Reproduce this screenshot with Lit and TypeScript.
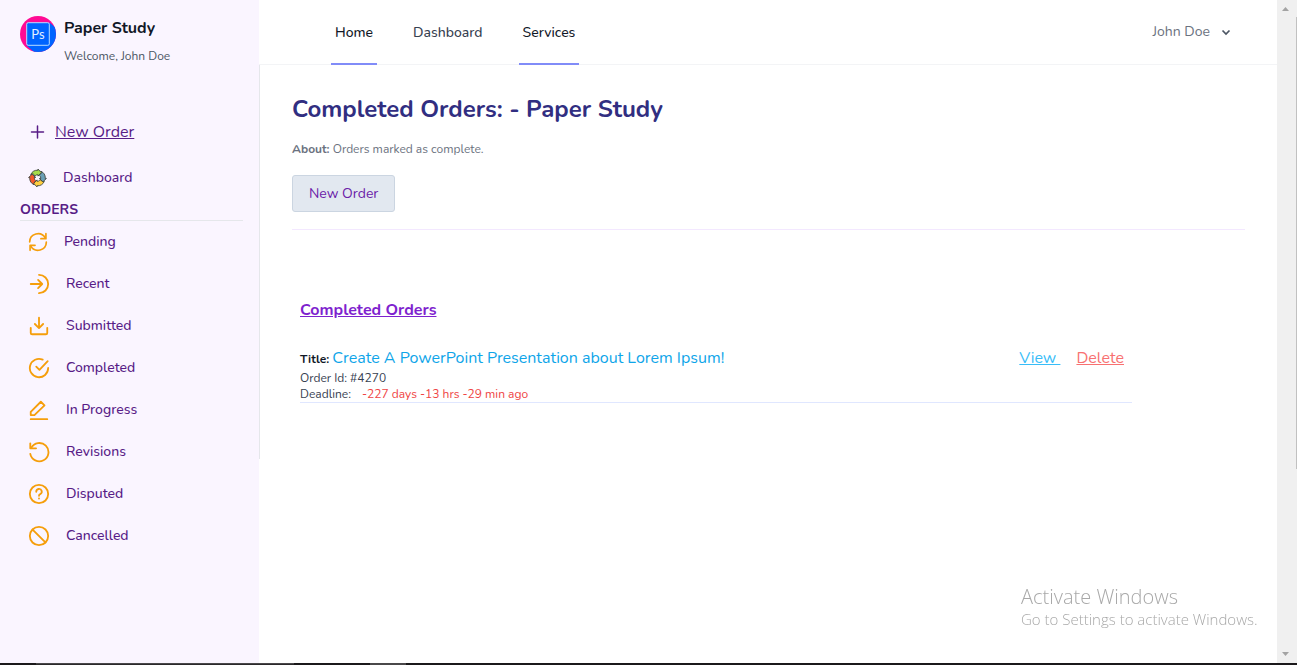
import { LitElement, html, css, svg } from "lit";
import { customElement, property } from "lit/decorators.js";

const icons: Record<string, unknown> = {
  cycle: svg`<path d="M22 12a10 10 0 0 1-18.600 5M2 12A10 10 0 0 1 20.600 7"/><path d="M21.500 2v6h-6M2.500 22v-6h6"/>`,
  enter: svg`<path d="M12 2a10 10 0 0 1 0 20"/><path d="M3 12h12M11 7.500l4.500 4.500-4.500 4.500"/>`,
  download: svg`<path d="M3 14v5.500a1.500 1.500 0 0 0 1.500 1.500h15a1.500 1.500 0 0 0 1.500-1.500V14"/><path d="M12 3v11M7.500 9.800 12 14.300l4.500-4.500"/>`,
  check: svg`<path d="M16 2.900A10 10 0 1 0 22 12"/><path d="m9 10.500 3.500 3.500L21.500 4.500"/>`,
  edit: svg`<path d="M3 22h18"/><path d="M3 17.500V14L14 3l4 4L7 17.500z"/>`,
  undo: svg`<path d="M2.500 14A10 10 0 1 0 3.500 7.500"/><path d="M2.500 2.500V8h6.300"/>`,
  question: svg`<circle cx="12" cy="12" r="10"/><path d="M9 9.500a3 3 0 1 1 4.300 2.700c-.900.400-1.300.900-1.300 1.800"/><path d="M12 16.800v.200"/>`,
  block: svg`<circle cx="12" cy="12" r="10"/><path d="m5 5 14 14"/>`,
};

@customElement("stroke-icon")
class StrokeIcon extends LitElement {
  @property() name = "";
  static styles = css`
    :host { display: flex; flex: none; width: 22px; height: 22px; color: #f59e0b; }
    svg { width: 100%; height: 100%; }
  `;
  render() {
    return html`<svg viewBox="0 0 24 24" fill="none" stroke="currentColor" stroke-width="2"
      stroke-linecap="round" stroke-linejoin="round" aria-hidden="true">${icons[this.name]}</svg>`;
  }
}

@customElement("app-sidebar")
class AppSidebar extends LitElement {
  static styles = css`
    :host { display: block; background: #faf5ff; color: #581c87; font-size: 14px; line-height: 20px; }
    a { color: inherit; text-decoration: none; }
    .brand { display: flex; gap: 8px; padding: 16px 20px 0; }
    .logo { width: 36px; height: 36px; flex: none; }
    .name { color: #111827; font-size: 16px; line-height: 24px; font-weight: 700; }
    .welcome { color: #4b5563; font-size: 12px; line-height: 16px; margin-top: 8px; }
    .new { display: flex; align-items: center; gap: 9px; margin: 56px 28px 0; font-size: 16px; line-height: 24px; }
    .new span { text-decoration: underline; }
    .plus { width: 18px; height: 18px; flex: none; }
    .dash { display: flex; align-items: center; gap: 16px; margin: 24px 28px 0; font-weight: 500; }
    .wheel { width: 19px; height: 20px; flex: none; }
    h2 { margin: 12px 16px 0 20px; border-bottom: 1px solid #e5e7eb; font-size: 14px; line-height: 20px; font-weight: 700; }
    ul { list-style: none; margin: 0; padding: 0; font-weight: 500; }
    li { display: flex; align-items: center; height: 42px; padding-left: 28px; }
    li a { display: flex; align-items: center; gap: 16px; }
    .first stroke-icon { width: 20px; height: 20px; }
  `;
  items = [
    ["cycle", "Pending"], ["enter", "Recent"], ["download", "Submitted"], ["check", "Completed"],
    ["edit", "In Progress"], ["undo", "Revisions"], ["question", "Disputed"], ["block", "Cancelled"],
  ];
  render() {
    return html`
      <div class="brand">
        <svg class="logo" viewBox="0 0 36 36" aria-hidden="true">
          <clipPath id="c"><circle cx="18" cy="18" r="18"/></clipPath>
          <g clip-path="url(#c)">
            <path d="M0 0h36v36H0z" fill="#ff0a94"/>
            <path d="M29.500 6.500 36 12v24H14L6.500 29.500z" fill="#0064ff"/>
          </g>
          <rect x="6.700" y="6.700" width="22.600" height="22.600" rx="1.500" fill="#0064ff" stroke="#b9dcff"/>
          <text x="18" y="23" text-anchor="middle" font-size="13" font-family="Lato, sans-serif" fill="#e4f0ff">Ps</text>
        </svg>
        <div>
          <div class="name">Paper Study</div>
          <div class="welcome">Welcome, John Doe</div>
        </div>
      </div>
      <nav>
        <a class="new" href="#new">
          <svg class="plus" viewBox="0 0 18 18" fill="none" stroke="currentColor" stroke-width="1.500" stroke-linecap="round" aria-hidden="true"><path d="M9.500 3v12M3.500 9h12"/></svg>
          <span>New Order</span>
        </a>
        <a class="dash" href="#dashboard">
          <svg class="wheel" viewBox="0 0 20 20" stroke="#3a3f3a" stroke-width=".9" stroke-linejoin="round" aria-hidden="true">
            <path d="M2.800 6.500A8 8 0 0 1 10.500 1.800V.600L14 4.300 10.500 8V6.500A3.500 3.500 0 0 0 7.300 8.200L5.500 5.500z" fill="#a6dc48"/>
            <path d="M13.500 2.800A8 8 0 0 1 18.200 10.500h1.200L15.700 14 12 10.500h1.500A3.500 3.500 0 0 0 11.800 7.300L14.500 4.500z" fill="#6a9fb5"/>
            <path d="M17.200 13.500A8 8 0 0 1 9.500 18.200v1.200L6 15.700 9.500 12v1.500A3.500 3.500 0 0 0 12.700 11.800L15.700 14z" fill="#ffcf3f"/>
            <path d="M6.500 17.200A8 8 0 0 1 1.800 9.500H.600L4.300 6 8 9.500H6.500A3.500 3.500 0 0 0 8.200 12.700L6 15.700z" fill="#f4582a"/>
          </svg>
          <span>Dashboard</span>
        </a>
        <h2>ORDERS</h2>
        <ul>
          ${this.items.map(([icon, label], i) => html`
            <li class=${i === 0 ? "first" : ""}><a href="#${icon}"><stroke-icon name=${icon}></stroke-icon><span>${label}</span></a></li>`)}
        </ul>
      </nav>`;
  }
}

@customElement("app-header")
class AppHeader extends LitElement {
  static styles = css`
    :host { display: flex; justify-content: space-between; height: 64px; border-bottom: 1px solid #f3f4f6; padding: 0 44px 0 72px; font-size: 14px; line-height: 20px; }
    nav { display: flex; gap: 32px; height: 65px; font-weight: 500; }
    a { display: flex; align-items: center; box-sizing: border-box; padding: 2px 4px 0; border-bottom: 2px solid transparent; color: #374151; text-decoration: none; }
    .on { color: #111827; border-bottom-color: #818cf8; }
    button { display: flex; align-items: center; gap: 9px; border: 0; padding: 0; background: none; color: #6b7280; font: inherit; }
    svg { width: 14px; height: 16px; }
  `;
  render() {
    return html`
      <nav>
        <a class="on" href="#home">Home</a>
        <a href="#dashboard">Dashboard</a>
        <a class="on" href="#services">Services</a>
      </nav>
      <button type="button" aria-haspopup="menu">John Doe
        <svg viewBox="0 0 14 16" fill="none" stroke="#4b5563" stroke-width="1.700" aria-hidden="true"><path d="m3.500 6.500 3.500 3.500 3.500-3.500"/></svg>
      </button>`;
  }
}

@customElement("app-root")
class AppRoot extends LitElement {
  static styles = css`
    :host { display: grid; grid-template-rows: 1fr 2px; height: 100vh; overflow: hidden; background: #fff; font-family: Nunito, "Open Sans", sans-serif; }
    .window { display: grid; grid-template-columns: 259px minmax(0, 1fr) 20px; min-height: 0; }
    main { box-sizing: border-box; border-left: 1px solid #e5e7eb; min-height: 394px; padding: 28px 32px 0; }
    h1 { margin: 0; color: #312e81; font-size: 24px; line-height: 32px; font-weight: 700; }
    .about { margin: 16px 0 0; color: #6b7280; font-size: 12px; line-height: 16px; }
    .about b, .title b { font-weight: 700; }
    .btn { margin-top: 18px; height: 37px; padding: 0 16px; border: 1px solid #cbd5e1; border-radius: 3px; background: #e2e8f0; color: #6b21a8; font: inherit; font-size: 14px; }
    hr { margin: 17px 0 0; border: 0; border-top: 1px solid #f3e8ff; }
    .orders { max-width: 832px; padding: 68px 8px 0; }
    h2 { margin: 0; color: #7e22ce; font-size: 16px; line-height: 24px; font-weight: 700; text-decoration: underline; }
    .order { display: flex; justify-content: space-between; margin-top: 24px; padding-right: 8px; border-bottom: 1px solid #e0e7ff; font-size: 12px; line-height: 16px; color: #374151; }
    .title { height: 24px; line-height: 24px; color: #111827; }
    .title a, .actions { font-size: 16px; line-height: 24px; }
    .title a { color: #0ea5e9; text-decoration: none; }
    .late { color: #ef4444; margin-left: 8px; }
    .actions { display: flex; gap: 16px; }
    .view { color: #38bdf8; white-space: pre; }
    .delete { color: #f87171; }
    .scroll { display: flex; flex-direction: column; justify-content: space-between; background: #f0f0f0; }
    .scroll svg { width: 17px; height: 17px; fill: #a3a3a3; }
    .thumb { align-self: flex-end; width: 1px; height: 452px; margin-bottom: auto; background: #c1c1c1; }
    .watermark { position: fixed; right: 40px; bottom: 36px; width: 236px; color: #a8a8a8; font-family: "Segoe UI", "Open Sans", sans-serif; font-weight: 300; font-size: 15px; line-height: 20px; white-space: nowrap; }
    .watermark div { font-size: 20px; line-height: 24px; }
    .taskbar { display: flex; background: #1b191b; }
    .task { width: 258px; margin-left: 36px; background: linear-gradient(#4a484a 50%, #2b292b 50%); }
    .task.small { width: 36px; margin-left: 76px; background: #4a484a; }
  `;
  render() {
    return html`
      <div class="window">
        <app-sidebar></app-sidebar>
        <div>
          <app-header></app-header>
          <main>
            <h1>Completed Orders: - Paper Study</h1>
            <p class="about"><b>About:</b> Orders marked as complete.</p>
            <button class="btn" type="button">New Order</button>
            <hr>
            <section class="orders">
              <h2>Completed Orders</h2>
              <article class="order">
                <div>
                  <div class="title"><b>Title:</b> <a href="#order">Create A PowerPoint Presentation about Lorem Ipsum!</a></div>
                  <div>Order Id: #4270</div>
                  <div>Deadline: <span class="late">-227 days -13 hrs -29 min ago</span></div>
                </div>
                <div class="actions"><a class="view" href="#view">View </a><a class="delete" href="#delete">Delete</a></div>
              </article>
            </section>
          </main>
        </div>
        <div class="scroll" aria-hidden="true">
          <svg viewBox="0 0 17 17"><path d="M5 11h7L8.500 7z"/></svg>
          <div class="thumb"></div>
          <svg viewBox="0 0 17 17"><path d="M5 6h7L8.500 10z"/></svg>
        </div>
      </div>
      <div class="taskbar" aria-hidden="true"><div class="task"></div><div class="task small"></div></div>
      <div class="watermark"><div>Activate Windows</div>Go to Settings to activate Windows.</div>`;
  }
}
